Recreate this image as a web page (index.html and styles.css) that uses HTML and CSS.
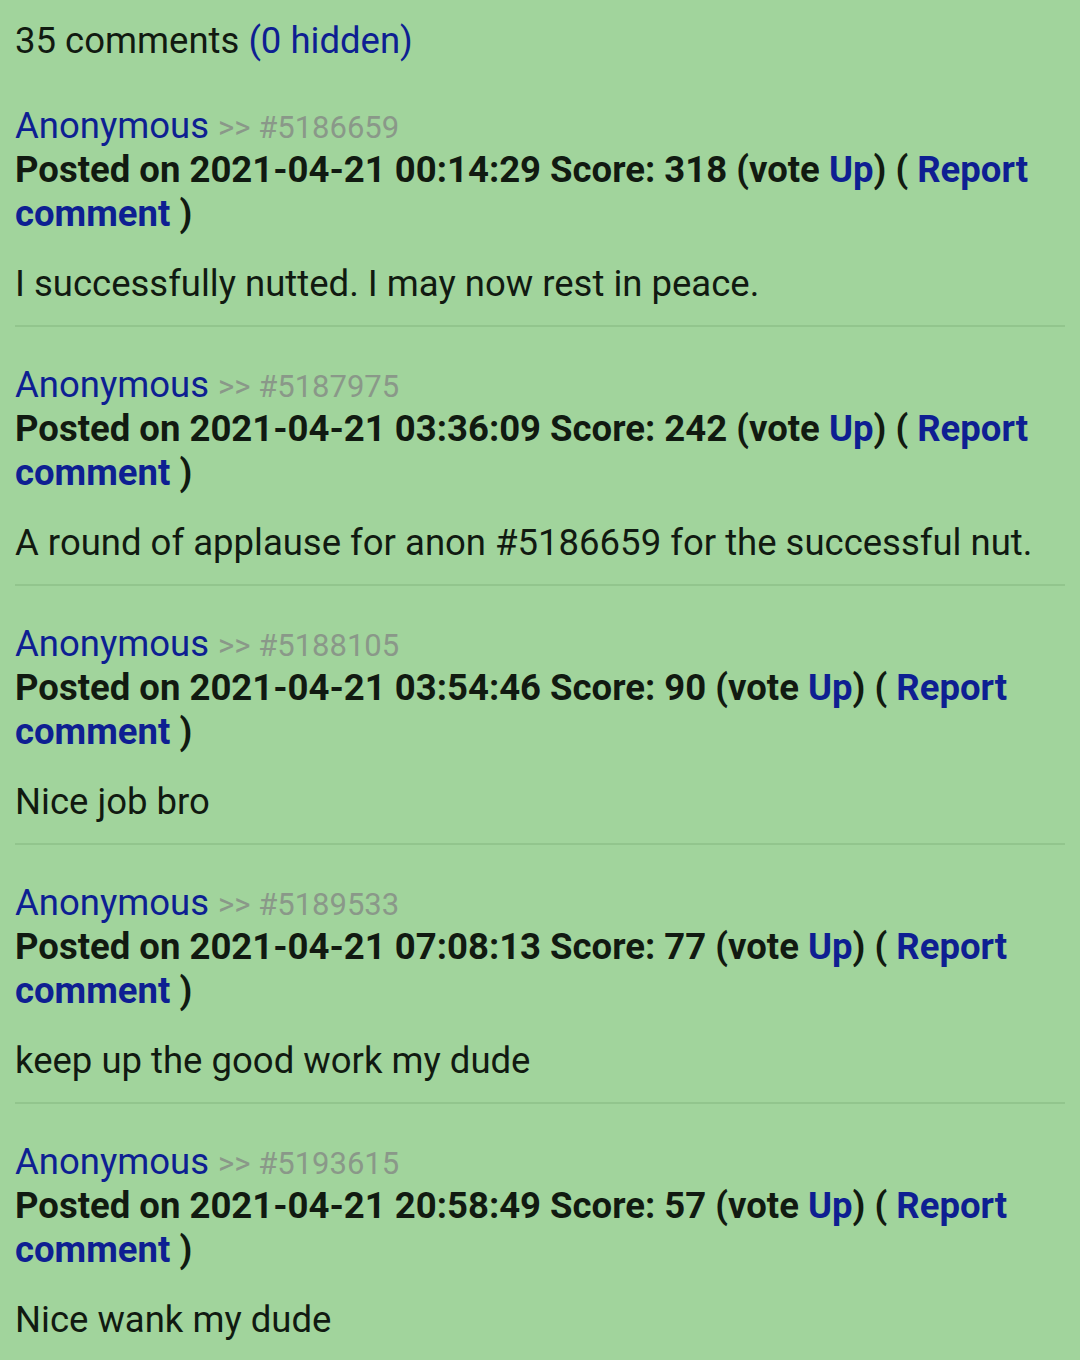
FILE: index.html
```html
<!DOCTYPE html>
<html>
<head>
<meta charset="utf-8">
<link rel="stylesheet" href="styles.css">
</head>
<body>
<div class="page">
  <div class="count">35 comments <a class="link">(0 hidden)</a></div>

  <div class="comment">
    <div class="author"><a class="link">Anonymous</a> <span class="ref">&gt;&gt; #5186659</span></div>
    <div class="meta">Posted on 2021-04-21 00:14:29 Score: 318 (vote <a class="link">Up</a>) ( <a class="link">Report comment</a> )</div>
    <p class="body">I successfully nutted. I may now rest in peace.</p>
  </div>

  <div class="comment">
    <div class="author"><a class="link">Anonymous</a> <span class="ref">&gt;&gt; #5187975</span></div>
    <div class="meta">Posted on 2021-04-21 03:36:09 Score: 242 (vote <a class="link">Up</a>) ( <a class="link">Report comment</a> )</div>
    <p class="body">A round of applause for anon #5186659 for the successful nut.</p>
  </div>

  <div class="comment">
    <div class="author"><a class="link">Anonymous</a> <span class="ref">&gt;&gt; #5188105</span></div>
    <div class="meta">Posted on 2021-04-21 03:54:46 Score: 90 (vote <a class="link">Up</a>) ( <a class="link">Report comment</a> )</div>
    <p class="body">Nice job bro</p>
  </div>

  <div class="comment">
    <div class="author"><a class="link">Anonymous</a> <span class="ref">&gt;&gt; #5189533</span></div>
    <div class="meta">Posted on 2021-04-21 07:08:13 Score: 77 (vote <a class="link">Up</a>) ( <a class="link">Report comment</a> )</div>
    <p class="body">keep up the good work my dude</p>
  </div>

  <div class="comment">
    <div class="author"><a class="link">Anonymous</a> <span class="ref">&gt;&gt; #5193615</span></div>
    <div class="meta">Posted on 2021-04-21 20:58:49 Score: 57 (vote <a class="link">Up</a>) ( <a class="link">Report comment</a> )</div>
    <p class="body">Nice wank my dude</p>
  </div>
</div>
</body>
</html>
```

FILE: styles.css
```css
html, body {
  margin: 0;
  padding: 0;
  background: #a1d49c;
}
body {
  font-family: Roboto, "Noto Sans", sans-serif;
  color: #111a11;
  font-size: 36.5px;
  width: 1080px;
  height: 1360px;
  overflow: hidden;
}
.page {
  padding: 19px 15px 0 15px;
}
.link {
  color: #0e1f92;
  text-decoration: none;
}
.count {
  line-height: 44px;
  margin-bottom: 42px;
}
.comment {
  border-bottom: 2px solid #92c58d;
  margin-bottom: 37px;
}
.author {
  line-height: 41px;
}
.ref {
  color: #8a9889;
  font-size: 31px;
}
.meta {
  font-weight: bold;
  line-height: 44px;
}
.body {
  margin: 26px 0 19px 0;
  line-height: 44px;
}
```
